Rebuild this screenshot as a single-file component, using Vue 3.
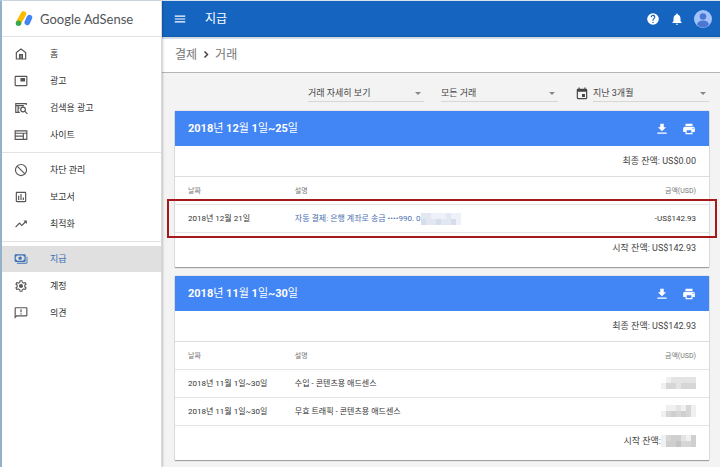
<script setup>
import { ref } from 'vue'

const navGroups = [
  [
    { id: 'home', label: '홈', outline: true },
    { id: 'ads', label: '광고' },
    { id: 'search', label: '검색용 광고', outline: true },
    { id: 'sites', label: '사이트', outline: true },
  ],
  [
    { id: 'block', label: '차단 관리', outline: true },
    { id: 'report', label: '보고서' },
    { id: 'trend', label: '최적화' },
  ],
  [
    { id: 'payments', label: '지급', active: true },
    { id: 'settings', label: '계정' },
    { id: 'feedback', label: '의견' },
  ],
]

const icons = {
  home: 'M4 20.500V9.500L12 3.500l8 6v11zM9.500 20v-7h5v7M12 13v7',
  ads: 'M19 7h-8v6h8V7zm2-4H3c-1.100 0-2 .9-2 2v14c0 1.100.9 2 2 2h18c1.100 0 2-.9 2-2V5c0-1.100-.9-2-2-2zm0 16H3V5h18v14z',
  search: 'M21 7V4.500H3v15h7M3 8h14M7 8v11M7 12h3M15.500 10.500a4 4 0 1 0 0 8 4 4 0 0 0 0-8zM18.500 17.500 23 22',
  sites: 'M2 5h20v14.500H2zM2 9h20M16 9v10M2 14h14',
  block: 'M12 2.500a9.500 9.500 0 1 0 0 19 9.500 9.500 0 0 0 0-19zM5.300 5.300l13.400 13.400',
  report: 'M19 3H5c-1.100 0-2 .9-2 2v14c0 1.100.9 2 2 2h14c1.100 0 2-.9 2-2V5c0-1.100-.9-2-2-2zm0 16H5V5h14v14zM7 10h2v7H7zm4-3h2v10h-2zm4 6h2v4h-2z',
  trend: 'M16 6l2.290 2.290-4.880 4.880-4-4L2 16.590 3.410 18l6-6 4 4 6.300-6.290L22 12V6z',
  payments: 'M18 4H3C1.900 4 1 4.900 1 6v9c0 1.100.9 2 2 2h15c1.100 0 2-.9 2-2V6c0-1.100-.9-2-2-2zM5 15c0-1.100-.9-2-2-2V8c1.100 0 2-.9 2-2h11c0 1.100.9 2 2 2v5c-1.100 0-2 .9-2 2H5zm5.500-7.500a3 3 0 1 0 0 6 3 3 0 0 0 0-6zM21.500 8v10.500H5V20h16c1.100 0 2-.9 2-2V8z',
  settings: 'M19.430 12.980c.04-.32.070-.64.070-.98s-.03-.66-.07-.98l2.110-1.650c.19-.15.240-.42.120-.64l-2-3.460c-.12-.22-.39-.3-.61-.22l-2.490 1c-.52-.4-1.080-.73-1.690-.98l-.38-2.650A.49.49 0 0 0 14 2h-4c-.25 0-.46.180-.49.420l-.38 2.650c-.61.250-1.170.590-1.690.980l-2.490-1c-.23-.09-.49 0-.61.220l-2 3.460c-.13.220-.07.490.120.640l2.110 1.650c-.04.320-.07.650-.07.980s.03.660.070.980l-2.110 1.650c-.19.150-.24.420-.12.640l2 3.460c.12.220.39.300.61.220l2.490-1c.52.400 1.080.730 1.690.980l.38 2.650c.03.240.24.420.49.420h4c.25 0 .46-.18.490-.42l.38-2.650c.61-.25 1.170-.59 1.690-.98l2.490 1c.23.090.49 0 .61-.22l2-3.460c.12-.22.070-.49-.12-.64l-2.110-1.650zm-2 0 .12.950 2 1.570-.8 1.380-2.350-.95-.85.640c-.42.320-.86.580-1.330.770l-.8.330-.37 2.330h-2.100l-.37-2.330-.8-.33c-.48-.2-.91-.45-1.330-.77l-.85-.64-2.350.95-.8-1.380 2-1.570-.12-.95a6 6 0 0 1 0-1.960l.12-.95-2-1.570.8-1.380 2.350.95.850-.64c.42-.32.86-.57 1.330-.77l.8-.33.370-2.330h2.100l.37 2.330.8.330c.48.200.91.450 1.330.770l.85.640 2.350-.95.800 1.380-2 1.570.120.950c.1.650.1 1.300 0 1.960zM12 8.500a3.500 3.500 0 1 0 0 7 3.500 3.500 0 0 0 0-7z',
  feedback: 'M21 2H3c-1.100 0-2 .9-2 2v18l4-4h16c1.100 0 2-.9 2-2V4c0-1.100-.9-2-2-2zm0 14H4l-1 1V4h18v12zM11 12.500h2v2h-2zm0-7h2v5h-2z',
}

const filters = ref([
  { id: 'view', label: '보기 방식', value: '거래 자세히 보기' },
  { id: 'type', label: '거래 유형', value: '모든 거래' },
  { id: 'range', label: '기간', value: '지난 3개월', calendar: true },
])

const statements = [
  {
    title: '2018년 12월 1일~25일',
    ending: 'US$0.00',
    rows: [
      {
        date: '2018년 12월 21일',
        text: '자동 결제: 은행 계좌로 송금 ••••990. 0',
        link: true,
        marked: true,
        amount: '-US$142.93',
      },
    ],
    starting: 'US$142.93',
  },
  {
    title: '2018년 11월 1일~30일',
    ending: 'US$142.93',
    rows: [
      {
        date: '2018년 11월 1일~30일',
        text: '수입 - 콘텐츠용 애드센스',
        mask: [0, 1, 2, 2, 2, 2, 2, 1, 3, 3, 2, 3, 3, 3],
      },
      {
        date: '2018년 11월 1일~30일',
        text: '무효 트래픽 - 콘텐츠용 애드센스',
        mask: [0, 1, 1, 2, 1, 3, 1, 1, 3, 4, 3, 4, 3, 1],
      },
    ],
    startingMask: [1, 3, 4, 4, 2, 1, 4, 1, 4, 4, 5, 3, 3, 4],
  },
]

const linkMask = [2, 2, 1, 1, 1, 2, 1, 1, 3, 2, 2, 3, 2, 2, 3, 1]

// Numbers in a period title are bold, the date units between them are not.
const titleParts = (title) => title.split(/([\d~]+)/).filter(Boolean)
const isNumber = (part) => /^[\d~]/.test(part)
</script>

<template>
  <div class="page">
    <aside class="sidebar">
      <a class="brand" href="#">
        <svg class="brand-mark" viewBox="0 0 36 32" aria-hidden="true">
          <path d="M17 6 8 22" stroke="#fbbc04" stroke-width="11" stroke-linecap="round" />
          <path d="M29 13 24.500 23" stroke="#4285f4" stroke-width="11" stroke-linecap="round" />
          <circle cx="7" cy="24.500" r="5.500" fill="#34a853" />
        </svg>
        <span>Google AdSense</span>
      </a>
      <nav>
        <ul v-for="(group, g) in navGroups" :key="g" class="nav-group">
          <li v-for="item in group" :key="item.id">
            <a href="#" class="nav-item" :class="{ active: item.active }">
              <svg class="icon" :class="{ outline: item.outline }" viewBox="0 0 24 24" aria-hidden="true"><path :d="icons[item.id]" /></svg>
              <span>{{ item.label }}</span>
            </a>
          </li>
        </ul>
      </nav>
    </aside>

    <div class="content">
      <header class="topbar">
        <button class="icon-button" aria-label="메뉴">
          <svg class="icon" viewBox="0 0 24 24"><path d="M3 18h18v-2H3v2zm0-5h18v-2H3v2zm0-7v2h18V6H3z" /></svg>
        </button>
        <h1>지급</h1>
        <div class="tools">
          <button class="icon-button" aria-label="도움말">
            <svg class="icon" viewBox="0 0 24 24"><path d="M12 2a10 10 0 1 0 0 20 10 10 0 0 0 0-20zm1 17h-2v-2h2v2zm2.070-7.750-.9.920C13.450 12.900 13 13.500 13 15h-2v-.5c0-1.100.45-2.100 1.170-2.830l1.240-1.260A2 2 0 1 0 10 9H8a4 4 0 1 1 7.070 2.250z" /></svg>
          </button>
          <button class="icon-button" aria-label="알림">
            <svg class="icon" viewBox="0 0 24 24"><path d="M12 22c1.100 0 2-.9 2-2h-4c0 1.100.9 2 2 2zm6-6v-5c0-3.070-1.640-5.640-4.500-6.320V4a1.500 1.500 0 0 0-3 0v.68C7.630 5.360 6 7.920 6 11v5l-2 2v1h16v-1l-2-2z" /></svg>
          </button>
          <button class="icon-button" aria-label="내 계정">
            <svg class="avatar" viewBox="0 0 36 36">
              <circle cx="18" cy="18" r="18" fill="#a1c2fa" />
              <circle cx="18" cy="13" r="6.500" fill="#4a76d4" />
              <path d="M6 29c1-5 6-8 12-8s11 3 12 8c-3 4-7 6-12 6s-9-2-12-6z" fill="#4a76d4" />
            </svg>
          </button>
        </div>
      </header>

      <div class="breadcrumb">
        <a href="#">결제</a>
        <svg class="chevron" viewBox="0 0 8 12" aria-hidden="true"><path d="M2 2l4 4-4 4" /></svg>
        <span>거래</span>
      </div>

      <main>
        <form class="filters">
          <div v-for="f in filters" :key="f.id" class="filter">
            <svg v-if="f.calendar" class="icon calendar" viewBox="0 0 24 24" aria-hidden="true">
              <path d="M17 12h-5v5h5v-5zM16 1v2H8V1H6v2H5c-1.100 0-2 .9-2 2v14c0 1.100.9 2 2 2h14c1.100 0 2-.9 2-2V5c0-1.100-.9-2-2-2h-1V1h-2zm3 18H5V8h14v11z" />
            </svg>
            <div class="select-box">
              <select v-model="f.value" :aria-label="f.label">
                <option>{{ f.value }}</option>
              </select>
              <svg class="caret" viewBox="0 0 10 5" aria-hidden="true"><path d="M0 0h10L5 5z" /></svg>
            </div>
          </div>
        </form>

        <section v-for="s in statements" :key="s.title" class="card">
          <header class="card-head">
            <h2><span v-for="(part, k) in titleParts(s.title)" :key="k" :class="{ number: isNumber(part) }">{{ part }}</span></h2>
            <button class="icon-button" aria-label="다운로드">
              <svg class="icon" viewBox="0 0 24 24"><path d="M19 9h-4V3H9v6H5l7 7 7-7zM4 18v2h16v-2H4z" /></svg>
            </button>
            <button class="icon-button" aria-label="인쇄">
              <svg class="icon" viewBox="0 0 24 24"><path d="M19 8H5c-1.660 0-3 1.340-3 3v6h4v4h12v-4h4v-6c0-1.660-1.340-3-3-3zm-3 11H8v-5h8v5zm3-7a1 1 0 1 1 0-2 1 1 0 0 1 0 2zm-1-9H6v4h12V3z" /></svg>
            </button>
          </header>
          <p class="balance ending">최종 잔액: {{ s.ending }}</p>
          <table>
            <thead>
              <tr>
                <th class="date" scope="col">날짜</th>
                <th scope="col">설명</th>
                <th class="amount" scope="col">금액(USD)</th>
              </tr>
            </thead>
            <tbody>
              <tr v-for="(r, i) in s.rows" :key="i" :class="{ marked: r.marked }">
                <td>{{ r.date }}</td>
                <td>
                  <a v-if="r.link" class="entry" href="#">
                    <span>{{ r.text }}</span>
                    <span class="mask blue"><i v-for="(n, k) in linkMask" :key="k" :class="'t' + n"></i></span>
                  </a>
                  <template v-else>{{ r.text }}</template>
                </td>
                <td class="amount">
                  <template v-if="r.amount">{{ r.amount }}</template>
                  <span v-else class="mask"><i v-for="(n, k) in r.mask" :key="k" :class="'t' + n"></i></span>
                </td>
              </tr>
            </tbody>
          </table>
          <p class="balance starting">
            <span>시작 잔액: {{ s.starting }}</span>
            <span v-if="s.startingMask" class="mask"><i v-for="(n, k) in s.startingMask" :key="k" :class="'t' + n"></i></span>
          </p>
        </section>
      </main>
    </div>
  </div>
</template>

<style>
body {
  background: #f3f3f3;
}
</style>

<style scoped>
* {
  box-sizing: border-box;
}
.page {
  display: flex;
  min-height: 100vh;
  border-top: 1px solid #d5e3ee;
  border-left: 2px solid #94b3cb;
  background: #f3f3f3;
  color: #333;
  font-family: Roboto, "Noto Sans CJK KR", sans-serif;
  font-size: 9px;
  line-height: 12px;
}
a {
  color: inherit;
  text-decoration: none;
}
h1, h2, p, ul {
  margin: 0;
  padding: 0;
  font-weight: 400;
}
.icon {
  display: block;
  width: 14px;
  height: 14px;
  flex: none;
  fill: currentColor;
}
.icon.outline {
  fill: none;
  stroke: currentColor;
  stroke-width: 2;
}
.icon-button {
  padding: 0;
  border: 0;
  background: none;
  color: inherit;
}

.sidebar {
  flex: none;
  width: 160px;
  background: #fff;
  border-right: 1px solid #d8d8d8;
  box-shadow: 1px 0 2px rgba(0, 0, 0, 0.2);
  z-index: 1;
}
.brand {
  display: flex;
  align-items: center;
  gap: 7px;
  height: 36px;
  padding-left: 13px;
  border-bottom: 1px solid #dfe3e6;
  color: #505458;
  font-family: Lato, Roboto, sans-serif;
  font-size: 13px;
}
.brand-mark {
  width: 18px;
  height: 16px;
  fill: none;
}
.nav-group {
  display: grid;
  gap: 1px;
  padding: 4px 0;
  list-style: none;
}
.nav-group + .nav-group {
  border-top: 1px solid #e3e3e3;
}
.nav-item {
  display: flex;
  align-items: center;
  gap: 22px;
  height: 26px;
  padding-left: 12px;
}
.nav-item .icon {
  color: #555;
}
.nav-item.active {
  background: #e0e0e0;
}
.nav-item.active,
.nav-item.active .icon {
  color: #3b6fb6;
}

.content {
  flex: 1;
  min-width: 0;
}
.topbar {
  display: flex;
  align-items: center;
  gap: 18px;
  height: 36px;
  padding: 0 8px 0 11px;
  background: #1565c0;
  color: #fff;
  border-bottom: 1px solid #1259ab;
}
.topbar h1 {
  flex: 1;
  font-size: 12px;
}
.tools {
  display: flex;
  align-items: center;
  gap: 10px;
}
.avatar {
  display: block;
  width: 18px;
  height: 18px;
}
.breadcrumb {
  display: flex;
  align-items: center;
  gap: 6px;
  height: 36px;
  padding: 0 0 2px 13px;
  background: #fff;
  border-top: 2px solid #d3dde6;
  border-bottom: 1px solid #b5b5b5;
  color: #757575;
  font-size: 12px;
}
.chevron {
  width: 6px;
  height: 9px;
  fill: none;
  stroke: #444;
  stroke-width: 2;
}

main {
  display: grid;
  gap: 9px;
  padding: 12px 11px 7px 13px;
}
.filters {
  display: grid;
  grid-template-columns: 116px 117px 134px;
  gap: 17px;
  justify-content: end;
  height: 17px;
}
.filter {
  display: flex;
  align-items: center;
  gap: 4px;
}
.calendar {
  color: #444;
}
.select-box {
  display: flex;
  align-items: center;
  flex: 1;
  height: 17px;
  border-bottom: 1px solid #d8d8d2;
}
select {
  flex: 1;
  min-width: 0;
  padding: 0;
  border: 0;
  appearance: none;
  background: none;
  color: #444;
  font: inherit;
}
.caret {
  width: 6px;
  height: 3px;
  margin-right: 3px;
  fill: #888;
}

.card {
  background: #fff;
  box-shadow: 0 1px 1px rgba(0, 0, 0, 0.3), 0 0 1px rgba(0, 0, 0, 0.3);
}
.card-head {
  display: flex;
  align-items: center;
  gap: 13px;
  height: 35px;
  padding: 0 13px;
  background: #4285f4;
  color: #fff;
}
.card-head h2 {
  flex: 1;
  font-size: 11px;
  white-space: pre-wrap;
}
.number {
  font-weight: 700;
}
.balance {
  display: flex;
  align-items: center;
  justify-content: flex-end;
  padding: 0 13px;
  color: #444;
}
.ending {
  height: 31px;
  border-bottom: 1px solid #ddd;
}
.starting {
  height: 34px;
  padding-bottom: 4px;
}
table {
  width: 100%;
  table-layout: fixed;
  border-collapse: separate;
  border-spacing: 0;
  font-size: 8px;
}
th, td {
  height: 28px;
  padding: 0 0 0 13px;
  border-bottom: 1px solid #e4e4e4;
  text-align: left;
}
th {
  color: #777;
  font-size: 7px;
  font-weight: 400;
}
.date {
  width: 20%;
}
.amount {
  width: 20%;
  padding-right: 13px;
  text-align: right;
}
.entry {
  display: flex;
  align-items: center;
  color: #4a6fb0;
}
.marked {
  position: relative;
}
.marked td:first-child::after {
  content: "";
  position: absolute;
  inset: -6px -8px -5px;
  border: 2px solid #a5191d;
  pointer-events: none;
}

.mask {
  display: inline-grid;
  grid-template-columns: repeat(7, 5px);
  grid-auto-rows: 6px;
  vertical-align: middle;
}
.mask.blue {
  grid-template-columns: repeat(8, 5px);
}
.t1 { background: #f0f0f0; }
.t2 { background: #e4e4e4; }
.t3 { background: #d6d6d6; }
.t4 { background: #cfcfcf; }
.t5 { background: #c4c4c4; }
.blue .t1 { background: #eef1f8; }
.blue .t2 { background: #e2e7f2; }
.blue .t3 { background: #d6deed; }
</style>
